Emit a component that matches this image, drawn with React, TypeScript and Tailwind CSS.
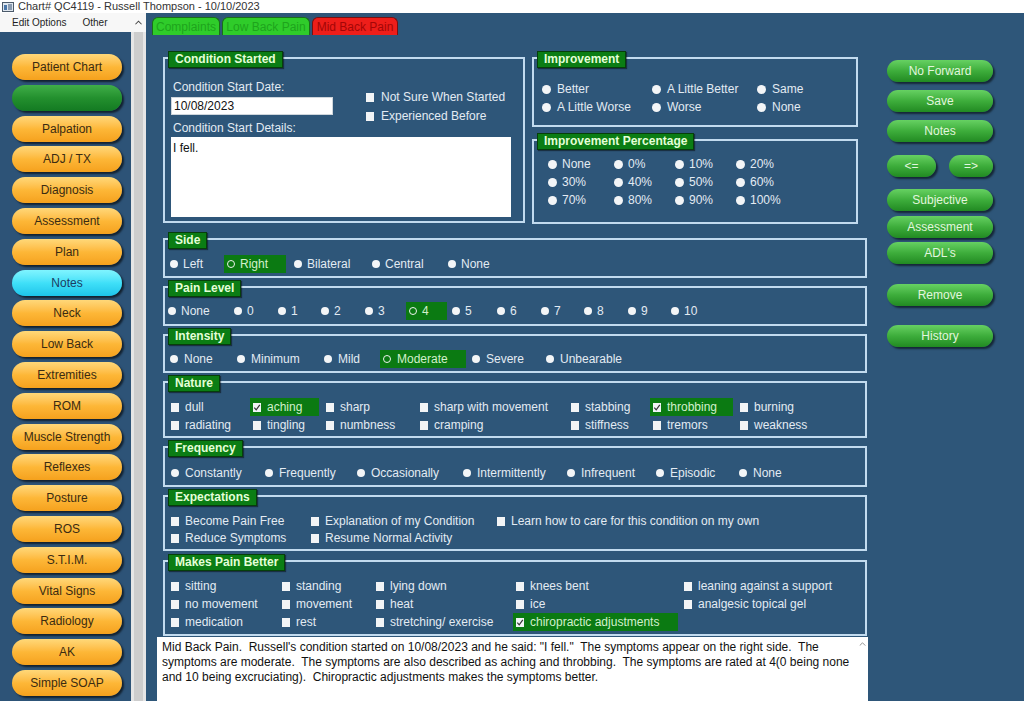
import React from 'react';

const FONT = "font-['Liberation_Sans',Arial,sans-serif]";
const LBL = 'text-[#e3ebf3]';

function Legend({ children }: { children: React.ReactNode }) {
  return (
    <div className="self-start -mt-[8px] ml-[3px] h-[17px] px-[6px] bg-[#0b7d14] border border-[#063f0a] text-[12px] leading-[15px] font-bold text-[#e4ffd8] shadow-[1px_1px_1px_rgba(0,0,0,0.45)] whitespace-nowrap">
      {children}
    </div>
  );
}

function RadioDot({ sel, big }: { sel?: boolean; big?: boolean }) {
  if (sel)
    return <span className="block w-[8px] h-[8px] rounded-full border-[1.5px] border-[#eef3ee] shrink-0" />;
  return big ? (
    <span className="block w-[9px] h-[9px] rounded-full bg-[#f3f5f7] shrink-0" />
  ) : (
    <span className="block w-[8px] h-[8px] rounded-full bg-[#f3f5f7] shrink-0" />
  );
}

function CheckBox({ checked }: { checked?: boolean }) {
  return (
    <span className="w-[8px] h-[9px] bg-[#f2f4f6] shrink-0 flex items-center justify-center">
      {checked && (
        <svg viewBox="0 0 8 9" className="w-[8px] h-[9px]">
          <path d="M1.3 4.6 L3.2 6.8 L6.8 1.8" stroke="#333" strokeWidth="1.2" fill="none" />
        </svg>
      )}
    </span>
  );
}

type Opt = { l: string; s?: boolean; hl?: string };

function Option({
  o,
  kind,
  gap,
  big,
}: {
  o: Opt;
  kind: 'r' | 'c';
  gap: string;
  big?: boolean;
}) {
  const mark = kind === 'r' ? <RadioDot sel={o.s} big={big} /> : <CheckBox checked={o.s} />;
  if (o.s && o.hl) {
    return (
      <div className="flex items-center h-[18px]">
        <div className={`flex items-center h-[18px] -ml-[3px] pl-[3px] bg-[#0b7a12] ${gap} ${o.hl}`}>
          {mark}
          <span className="text-[12px] text-[#d2f0cc] whitespace-nowrap">{o.l}</span>
        </div>
      </div>
    );
  }
  return (
    <div className={`flex items-center h-[18px] ${gap}`}>
      {mark}
      <span className={`text-[12px] whitespace-nowrap ${LBL}`}>{o.l}</span>
    </div>
  );
}

function Box({ cls, children }: { cls: string; children: React.ReactNode }) {
  return <div className={`border-2 border-[#c2dbef] flex flex-col ${cls}`}>{children}</div>;
}

function OrangeBtn({ label }: { label: string }) {
  return (
    <div className="w-[110px] h-[26px] shrink-0 rounded-full bg-linear-to-b from-[#ffd878] via-[#fdb737] to-[#f5a11c] shadow-[2px_2px_2px_rgba(0,0,0,0.6)] flex items-center justify-center text-[12px] text-[#3a2b12]">
      {label}
    </div>
  );
}

function GreenBtn({ children, cls }: { children?: React.ReactNode; cls: string }) {
  return (
    <div
      className={`h-[22px] rounded-full bg-linear-to-b from-[#66d162] via-[#3dad3b] to-[#218a22] shadow-[2px_2px_2px_rgba(0,0,0,0.55)] flex items-center justify-center text-[12px] text-[#e2f6de] ${cls}`}
    >
      {children}
    </div>
  );
}

const sideBtns = [
  'Patient Chart',
  '__green',
  'Palpation',
  'ADJ / TX',
  'Diagnosis',
  'Assessment',
  'Plan',
  '__notes',
  'Neck',
  'Low Back',
  'Extremities',
  'ROM',
  'Muscle Strength',
  'Reflexes',
  'Posture',
  'ROS',
  'S.T.I.M.',
  'Vital Signs',
  'Radiology',
  'AK',
  'Simple SOAP',
];

function Sidebar() {
  return (
    <div className="flex-1 bg-[#2d5377] flex flex-col gap-[4.8px] pt-[22px] pl-[12px] overflow-hidden">
      {sideBtns.map((b, i) => {
        if (b === '__green')
          return (
            <div
              key={i}
              className="w-[110px] h-[26px] shrink-0 rounded-full bg-linear-to-b from-[#3fae48] via-[#23902e] to-[#137a22] shadow-[2px_2px_2px_rgba(0,0,0,0.6)]"
            />
          );
        if (b === '__notes')
          return (
            <div
              key={i}
              className="w-[110px] h-[26px] shrink-0 rounded-full bg-linear-to-b from-[#7ff4ff] via-[#3fe0f8] to-[#1cc4ea] shadow-[2px_2px_2px_rgba(0,0,0,0.6)] flex items-center justify-center text-[12px] text-[#1c3c62]"
            >
              Notes
            </div>
          );
        return <OrangeBtn key={i} label={b} />;
      })}
    </div>
  );
}

const improvement: Opt[] = [
  { l: 'Better' },
  { l: 'A Little Better' },
  { l: 'Same' },
  { l: 'A Little Worse' },
  { l: 'Worse' },
  { l: 'None' },
];
const pct: Opt[] = ['None', '0%', '10%', '20%', '30%', '40%', '50%', '60%', '70%', '80%', '90%', '100%'].map(
  (l) => ({ l })
);
const side: Opt[] = [
  { l: 'Left' },
  { l: 'Right', s: true, hl: 'w-[62px]' },
  { l: 'Bilateral' },
  { l: 'Central' },
  { l: 'None' },
];
const pain: Opt[] = [
  { l: 'None' },
  { l: '0' },
  { l: '1' },
  { l: '2' },
  { l: '3' },
  { l: '4', s: true, hl: 'w-[41px]' },
  { l: '5' },
  { l: '6' },
  { l: '7' },
  { l: '8' },
  { l: '9' },
  { l: '10' },
];
const intensity: Opt[] = [
  { l: 'None' },
  { l: 'Minimum' },
  { l: 'Mild' },
  { l: 'Moderate', s: true, hl: 'w-[86px]' },
  { l: 'Severe' },
  { l: 'Unbearable' },
];
const nature: Opt[] = [
  { l: 'dull' },
  { l: 'aching', s: true, hl: 'w-[69px]' },
  { l: 'sharp' },
  { l: 'sharp with movement' },
  { l: 'stabbing' },
  { l: 'throbbing', s: true, hl: 'w-[83px]' },
  { l: 'burning' },
  { l: 'radiating' },
  { l: 'tingling' },
  { l: 'numbness' },
  { l: 'cramping' },
  { l: 'stiffness' },
  { l: 'tremors' },
  { l: 'weakness' },
];
const frequency: Opt[] = ['Constantly', 'Frequently', 'Occasionally', 'Intermittently', 'Infrequent', 'Episodic', 'None'].map(
  (l) => ({ l })
);
const expectations: Opt[] = [
  { l: 'Become Pain Free' },
  { l: 'Explanation of my Condition' },
  { l: 'Learn how to care for this condition on my own' },
  { l: 'Reduce Symptoms' },
  { l: 'Resume Normal Activity' },
];
const better: Opt[] = [
  { l: 'sitting' },
  { l: 'standing' },
  { l: 'lying down' },
  { l: 'knees bent' },
  { l: 'leaning against a support' },
  { l: 'no movement' },
  { l: 'movement' },
  { l: 'heat' },
  { l: 'ice' },
  { l: 'analgesic topical gel' },
  { l: 'medication' },
  { l: 'rest' },
  { l: 'stretching/ exercise' },
  { l: 'chiropractic adjustments', s: true, hl: 'w-[165px]' },
];

function Content() {
  return (
    <div className="w-[722px] pl-[11px] flex flex-col">
      {/* top section */}
      <div className="flex mt-[22px]">
        <Box cls="ml-[6px] w-[362px] h-[166px]">
          <Legend>Condition Started</Legend>
          <div className="flex">
            <div className="w-[201px] pl-[6px] flex flex-col">
              <div className={`mt-[12px] pl-[2px] text-[12px] leading-[14px] ${LBL}`}>Condition Start Date:</div>
              <div className="mt-[3px] w-[162px] h-[18px] bg-white border border-[#cfd6dc] text-[12px] leading-[16px] text-[#111] pl-[2px]">
                10/08/2023
              </div>
              <div className={`mt-[6px] pl-[2px] text-[12px] leading-[14px] ${LBL}`}>Condition Start Details:</div>
            </div>
            <div className="flex flex-col mt-[20px] gap-[1px]">
              <Option o={{ l: 'Not Sure When Started' }} kind="c" gap="gap-[7px]" />
              <Option o={{ l: 'Experienced Before' }} kind="c" gap="gap-[7px]" />
            </div>
          </div>
          <div className="ml-[6px] mt-[2px] w-[340px] h-[80px] bg-white text-[12px] leading-[14px] text-[#111] pl-[2px] pt-[4px]">
            I fell.
          </div>
        </Box>
        <div className="ml-[7px] flex flex-col">
          <Box cls="w-[326px] h-[70px]">
            <Legend>Improvement</Legend>
            <div className="mt-[12px] pl-[8px] grid grid-cols-[110px_105px_1fr] auto-rows-[18px]">
              {improvement.map((o, i) => (
                <Option key={i} o={o} kind="r" gap="gap-[6px]" big />
              ))}
            </div>
          </Box>
          <Box cls="mt-[12px] w-[326px] h-[85px]">
            <Legend>Improvement Percentage</Legend>
            <div className="mt-[5px] pl-[14px] grid grid-cols-[66px_61px_61px_1fr] auto-rows-[18px]">
              {pct.map((o, i) => (
                <Option key={i} o={o} kind="r" gap="gap-[5px]" big />
              ))}
            </div>
          </Box>
        </div>
      </div>

      <Box cls="ml-[6px] mt-[14px] w-[704px] h-[40px]">
        <Legend>Side</Legend>
        <div className="mt-[6px] pl-[5px] grid grid-cols-[57px_67px_78px_76px_1fr] auto-rows-[18px]">
          {side.map((o, i) => (
            <Option key={i} o={o} kind="r" gap="gap-[5px]" />
          ))}
        </div>
      </Box>

      <Box cls="ml-[6px] mt-[8px] w-[704px] h-[40px]">
        <Legend>Pain Level</Legend>
        <div className="mt-[5px] pl-[3px] grid grid-cols-[66px_44px_43px_44px_44px_43px_45px_44px_43px_44px_43px_1fr] auto-rows-[18px]">
          {pain.map((o, i) => (
            <Option key={i} o={o} kind="r" gap="gap-[5px]" />
          ))}
        </div>
      </Box>

      <Box cls="ml-[6px] mt-[8px] w-[704px] h-[39px]">
        <Legend>Intensity</Legend>
        <div className="mt-[5px] pl-[5px] grid grid-cols-[67px_87px_59px_89px_74px_1fr] auto-rows-[18px]">
          {intensity.map((o, i) => (
            <Option key={i} o={o} kind="r" gap="gap-[6px]" />
          ))}
        </div>
      </Box>

      <Box cls="ml-[6px] mt-[8px] w-[704px] h-[57px]">
        <Legend>Nature</Legend>
        <div className="mt-[6px] pl-[6px] grid grid-cols-[82px_73px_94px_151px_82px_87px_1fr] auto-rows-[18px]">
          {nature.map((o, i) => (
            <Option key={i} o={o} kind="c" gap="gap-[6px]" />
          ))}
        </div>
      </Box>

      <Box cls="ml-[6px] mt-[8px] w-[704px] h-[41px]">
        <Legend>Frequency</Legend>
        <div className="mt-[7px] pl-[6px] grid grid-cols-[94px_92px_106px_104px_89px_83px_1fr] auto-rows-[18px]">
          {frequency.map((o, i) => (
            <Option key={i} o={o} kind="r" gap="gap-[6px]" />
          ))}
        </div>
      </Box>

      <Box cls="ml-[6px] mt-[8px] w-[704px] h-[56px]">
        <Legend>Expectations</Legend>
        <div className="mt-[6px] pl-[6px] grid grid-cols-[140px_186px_1fr] auto-rows-[17px]">
          {expectations.map((o, i) => (
            <Option key={i} o={o} kind="c" gap="gap-[6px]" />
          ))}
        </div>
      </Box>

      <Box cls="ml-[6px] mt-[9px] w-[704px] h-[76px]">
        <Legend>Makes Pain Better</Legend>
        <div className="mt-[6px] pl-[6px] grid grid-cols-[111px_94px_140px_168px_1fr] auto-rows-[18px]">
          {better.map((o, i) => (
            <Option key={i} o={o} kind="c" gap="gap-[6px]" />
          ))}
        </div>
      </Box>

      <div className="mt-[1px] w-[711px] flex-1 bg-white flex">
        <div className="flex-1 pl-[5px] pt-[3px] text-[12px] leading-[15px] text-[#111] whitespace-pre overflow-hidden">
          {'Mid Back Pain.  Russell\'s condition started on 10/08/2023 and he said: "I fell."  The symptoms appear on the right side.  The'}
          {'\n'}
          {'symptoms are moderate.  The symptoms are also described as aching and throbbing.  The symptoms are rated at 4(0 being none'}
          {'\n'}
          {'and 10 being excruciating).  Chiropractic adjustments makes the symptoms better.'}
        </div>
        <div className="w-[12px] flex flex-col items-center pt-[5px]">
          <svg viewBox="0 0 8 5" className="w-[7px] h-[4px]">
            <path d="M0.5 4.5 L4 1 L7.5 4.5" stroke="#777" strokeWidth="1" fill="none" />
          </svg>
        </div>
      </div>
    </div>
  );
}

function RightCol() {
  return (
    <div className="ml-[19px] mt-[25px] w-[106px] flex flex-col">
      <GreenBtn cls="w-[106px]">No Forward</GreenBtn>
      <GreenBtn cls="w-[106px] mt-[8px]">Save</GreenBtn>
      <GreenBtn cls="w-[106px] mt-[8px]">Notes</GreenBtn>
      <div className="mt-[13px] flex justify-between">
        <GreenBtn cls="w-[49px] text-[10px]">{'<='}</GreenBtn>
        <GreenBtn cls="w-[44px] text-[10px]">{'=>'}</GreenBtn>
      </div>
      <GreenBtn cls="w-[106px] mt-[12px]">Subjective</GreenBtn>
      <GreenBtn cls="w-[106px] mt-[5px]">Assessment</GreenBtn>
      <GreenBtn cls="w-[106px] mt-[4px]">ADL's</GreenBtn>
      <GreenBtn cls="w-[106px] mt-[20px]">Remove</GreenBtn>
      <GreenBtn cls="w-[106px] mt-[19px]">History</GreenBtn>
    </div>
  );
}

function Tabs() {
  return (
    <div className="h-[22px] flex items-end pl-[6px] gap-[2px]">
      <div className="w-[68px] h-[18px] rounded-t-[6px] bg-[#2fcc2a] border border-b-0 border-[#1a6e18] flex items-center justify-center text-[12px] text-[#1ea41c]">
        Complaints
      </div>
      <div className="w-[88px] h-[18px] rounded-t-[6px] bg-[#2fcc2a] border border-b-0 border-[#1a6e18] flex items-center justify-center text-[12px] text-[#1ea41c]">
        Low Back Pain
      </div>
      <div className="w-[86px] h-[18px] rounded-t-[6px] bg-[#ee1e1a] border border-b-0 border-[#7a1010] flex items-center justify-center text-[12px] text-[#a40606]">
        Mid Back Pain
      </div>
    </div>
  );
}

export default function App() {
  return (
    <div className={`w-[1024px] h-[701px] overflow-hidden bg-[#2e5679] flex flex-col ${FONT}`}>
      {/* title bar */}
      <div className="h-[13px] shrink-0 bg-white flex items-center overflow-hidden">
        <svg viewBox="0 0 12 10" className="ml-[2px] w-[12px] h-[10px]">
          <rect x="0.5" y="0.5" width="11" height="9" fill="#dfe6ee" stroke="#4b5a6a" />
          <rect x="2" y="3" width="3" height="5" fill="#4b77a8" />
          <rect x="6" y="2" width="4" height="6" fill="#8a9bb0" />
        </svg>
        <span className="ml-[4px] text-[11px] leading-[13px] text-[#333]">
          Chart# QC4119 - Russell Thompson - 10/10/2023
        </span>
      </div>
      <div className="flex flex-1 min-h-0">
        <div className="w-[131px] flex flex-col">
          <div className="h-[19px] shrink-0 bg-[#f7f7f7] flex items-center text-[10px] text-[#1e1e1e]">
            <span className="ml-[12px]">Edit Options</span>
            <span className="ml-[16px]">Other</span>
          </div>
          <Sidebar />
        </div>
        {/* scrollbar */}
        <div className="w-[15px] flex flex-col bg-[#e6e6e6]">
          <div className="h-[19px] shrink-0 bg-[#f7f7f7] flex items-center justify-center">
            <svg viewBox="0 0 8 5" className="w-[7px] h-[5px]">
              <path d="M0.5 4.5 L4 1 L7.5 4.5" stroke="#444" strokeWidth="1.2" fill="none" />
            </svg>
          </div>
          <div className="flex-1 mx-[3px] bg-[#cdcdcd]" />
        </div>
        {/* main */}
        <div className="flex-1 flex flex-col">
          <Tabs />
          <div className="flex flex-1 min-h-0">
            <Content />
            <RightCol />
          </div>
        </div>
      </div>
    </div>
  );
}
